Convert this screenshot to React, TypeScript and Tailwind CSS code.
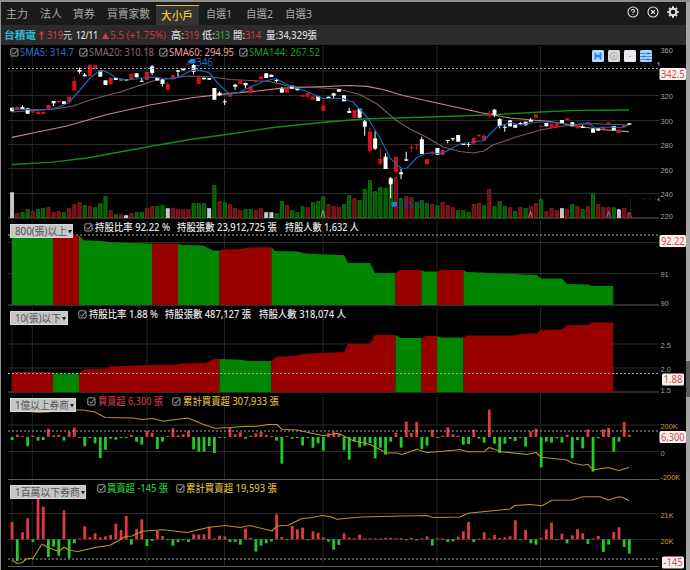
import { CircleHelp, CircleX } from "lucide-react";
import type { ReactNode } from "react";

const STEP = 5.187;
const LEFT = 12;
const barX = (i: number) => LEFT + i * STEP;

const verticals = [12, 32.3, 147, 224.5, 323, 437, 540.5];

// color, body top, body bottom, high, low (w = close below open, r = close above open)
type Candle = [string, number, number, number?, number?];

const candles: Candle[] = [
  ["w", 107.7, 111.3], ["r", 106.7, 110], ["w", 107, 109, 105], ["w", 108.3, 113.7], ["r", 111.3, 112.5],
  ["r", 111.7, 114], ["r", 111.7, 114], ["r", 105, 109], ["w", 101, 103.3, 101, 106], ["r", 100.7, 102.3],
  ["w", 101.3, 104], ["r", 96.7, 102.3], ["r", 81, 90.3, 77], ["w", 70, 71.7, 67.5, 73.7], ["w", 74.7, 76.3, 73],
  ["r", 64.7, 76.3], ["r", 65.3, 69.3], ["w", 70.7, 76.7], ["w", 80.3, 85], ["r", 77.7, 84.3],
  ["w", 78, 80], ["w", 79.7, 80.3], ["w", 79.3, 80.5], ["r", 73.7, 79.3], ["w", 73.3, 77.3],
  ["w", 80.8, 81.8, 77.7], ["r", 72, 80], ["w", 66.3, 73, 65, 75], ["w", 77.7, 80.3], ["w", 79.7, 84, 79, 86.7],
  ["r", 84, 89.7, 82], ["r", 75, 78.3], ["w", 70.3, 71.7, 70, 76.7], ["w", 68.7, 70.3], ["r", 63.5, 64.5],
  ["w", 65, 71.7, 64, 74.3], ["r", 77.3, 83.7], ["w", 77.7, 79.3], ["w", 78, 79.7], ["w", 88, 99.7],
  ["w", 92.7, 95.3, 91.5, 96], ["w", 101.3, 102.3, 99.3, 105], ["r", 93.3, 96.7], ["w", 84.7, 86.7, 84, 89.7], ["r", 80.3, 84],
  ["w", 83, 85.3, 82.5, 88.3], ["r", 86.3, 93], ["r", 81, 82.3], ["r", 76.3, 79.3], ["w", 73.3, 78],
  ["w", 74.7, 77], ["w", 80, 81, 79, 82.3], ["w", 89, 92.7, 87], ["r", 88.3, 92.7], ["w", 85.7, 88.7],
  ["w", 88.3, 90.3], ["r", 95, 96.7], ["r", 93, 96.7, 92, 98], ["r", 96.3, 99.7], ["w", 96, 101],
  ["r", 105.7, 110.7, 100], ["w", 96.7, 98.7], ["w", 93.3, 95.7, 93, 98.3], ["w", 89.3, 91.7], ["w", 95.3, 101.3],
  ["w", 111, 113, 107.7], ["r", 110, 118], ["w", 108.7, 117.7], ["w", 121.3, 126.7, 120, 135.7], ["r", 131.7, 150.7, 127.7, 153.3],
  ["w", 138.3, 148.7, 131, 150], ["r", 159, 163.7, 148.3, 165], ["w", 156.7, 169, 153.3], ["w", 178.3, 184.3, 177, 198.3], ["r", 157, 171.7, 157, 173.3],
  ["w", 172.3, 174.3, 169, 179], ["w", 159.3, 160.7, 151.7], ["r", 147, 148.3, 144, 151.7], ["r", 144.3, 145.3, 144, 150], ["w", 139.3, 154, 136.7],
  ["r", 159, 164.3], ["r", 151.7, 153.3, 151, 156], ["w", 148, 154.7], ["r", 150, 155], ["w", 140, 141, 140, 143.3],
  ["w", 138.3, 139.3, 138, 141], ["w", 135, 141.7], ["w", 143, 145], ["w", 144, 144.8, 142.3, 146.7], ["r", 138, 143.7, 137],
  ["r", 135, 136.3, 134, 137], ["r", 135.7, 140.7, 134], ["r", 112.7, 116, 110, 118.3], ["w", 109.7, 114.7, 109, 117], ["w", 119, 126, 118, 128.3],
  ["w", 126.7, 127.7, 125, 131.7], ["w", 120.3, 126.3], ["w", 124.7, 127.7], ["w", 123, 124, 122, 125], ["w", 121.7, 125.3],
  ["w", 120, 121.7, 118], ["r", 114.3, 117.7], ["r", 125.7, 127], ["w", 123, 126.3], ["r", 123.7, 127.7],
  ["r", 123.3, 127.7], ["w", 120, 123.7], ["r", 118.3, 120.3], ["w", 122.3, 126.3], ["r", 124.3, 128.3],
  ["w", 126.7, 128, 125], ["r", 122.3, 124.3], ["w", 129, 132.7, 128], ["w", 128.3, 130.7], ["r", 126.7, 129],
  ["r", 122, 123.7], ["w", 126, 130], ["r", 129.7, 133], ["r", 125, 127.3], ["w", 123.3, 124.7],
];

// bar height with its color letter
const volume =
  "w25 r4 g5 g8 r6 g8 g9 r10 r5 r6 g5 r9 r13 r15 g12 r11 g10 g14 g21 r7 g3 r3 w2 r4 g5 g5 r9 r11 g11 g12 w9 r9 r8 r8 r8 g14 g14 g14 w9 g32 r16 g15 r13 " +
  "r9 r7 g8 g8 r7 r9 w5 w5 g4 g16 r12 g7 g5 g11 r10 g15 g16 g21 r13 r11 r10 g13 g22 r19 g17 g28 g37 g26 g30 g29 g33 r40 g19 r21 r20 g15 g17 g14 r13 g12 r15 r12 r10 g7 " +
  "g7 g5 r13 r14 g12 r28 g11 g16 g11 r10 g6 r10 g9 r11 r14 g18 r6 r9 r7 w9 r8 g13 r11 g8 r11 g24 r13 r10 r10 g10 w8 r9 r5";

const sma5 =
  "12,109 27,109.7 50,109.5 60,106.5 69,102.5 80,90 90,78 97,72.5 103,70.5 109,73 115,77.5 127,80 140,78.5 152,76.8 162,78 173,79 182,75.5 190,71 197,69.8 209,72.5 218,83.5 230,94.5 240,92 253,86 265,81 276,78.5 288,85 308,92 323,98.5 343,98.5 353,102 367,117 380,138 390,158 397,165 402,168.5 407,168 417,157.5 427,153 442,153.5 460,144 473,142 484,140.5 490,134 497,127 510,122.5 520,125 538,122 552,122 573,125 588,123 595,128 610,127 622,127.5 629,125";
const sma20 =
  "12,112 27,111 55,109 73,106 93,99 120,92 153,81 187,76 208,76.5 230,79.5 270,81.5 290,86.5 315,87.5 338,89 360,94.5 377,104 397,121 410,129 427,137.5 443,147 460,151.5 473,153 484,151 493,145 513,138 540,130 560,126.5 588,123.5 629,125";
const sma60 =
  "12,137.3 40,131.5 67,126 107,114.5 150,105 190,98 230,93.3 257,91 280,88.3 350,85.5 367,86.3 383,89.5 403,95.5 430,101.5 460,108 480,112.5 510,118 550,121.5 577,126 600,129.5 629,131.7";
const sma144 =
  "12,164.5 50,162.3 87,158 147,147 190,139.5 230,134 273,127.5 327,122 363,119 397,118 460,116 500,114.3 540,112 577,110.3 629,110";

const bigFlow = [
  -9, 7, 2, -28, 4, -11, -9, 25, 5, 6, -11, 16, 28, -2, -28, -3, -19, -63, -38, -5, -8, -3, -3, 6, -14, -23, 18, 13, -36, -14,
  3, 26, 5, 8, 19, -37, -44, -44, -27, -48, -2, -2, 28, 8, 14, -5, 4, 11, 16, 6, 3, -11, -80, 2, -5, -3, -25, -3, -32, -19,
  -41, 11, 17, 10, -40, -68, -14, -31, -26, -18, -64, -32, -53, -14, 13, -32, 46, 12, 45, -36, -26, 22, -2, 4, 29, 8, 4, -23, -21, 22,
  -5, -17, 82, -20, -48, -20, -6, -12, -3, -29, 17, 25, -91, -14, -17, -4, -17, 7, -64, -9, -34, 23, -104, -4, 23, 27, -44, -14, 45, 7,
];
const bigTotal =
  "12,410.5 28,411.5 38,412.3 47,412 67,410 83,410 95,412 105,417.5 133,418 142,419.5 153,418.5 163,421.3 172,420 188,418 203,424.3 215,428.3 230,427.5 243,426.5 257,426.3 268,424.5 277,424.5 282,429.3 297,430 323,435.7 338,433.3 353,440.5 370,444.5 387,453 397,453 402,454.5 417,449.3 427,452.5 443,451.3 460,449.5 468,451.7 484,451.7 489,447.5 502,451.7 527,454.5 536,452.5 541,457.3 567,460 572,463 583,465.3 588,464.3 593,470 608,467.5 619,470.5 629,467.5";

const smallFlow = [
  52, -65, 21, 63, -8, 125, 98, -53, -22, -49, 87, -57, -12, 2, 39, 6, 18, 6, 9, 13, 47, 28, 70, -16, 31, 60, -20, -5, 25, 10,
  -2, -19, -8, -3, -8, 15, 14, 15, 38, 2, 11, 9, -8, -8, -16, 32, 4, -37, -19, -12, -7, 75, 7, -2, 40, 30, 35, -2, 24, 19,
  6, -7, -31, -17, 18, 5, 3, 14, 2, 2, 2, 2, 4, 4, 2, 4, -3, 4, -3, 2, 9, -19, 2, 1, -8, -6, 8, 24, 52, -8,
  2, 21, 3, 13, 4, 6, 9, 57, -2, 28, -12, -16, 4, 30, 50, -2, 17, -12, 12, 30, 18, -14, 2, 10, -38, -16, 22, 36, -23, -43,
];
const smallTotal =
  "12,560 17,563.5 22,562.5 27,558.7 33,558.3 42,544 48,547.5 59,551.5 64,547 69,550.3 78,551.5 95,547.5 110,545.3 118,541 125,536.5 132,536 142,531.3 163,529.7 187,532.5 208,527.5 225,525.5 240,527.5 250,525.5 272,531 277,526 288,525.3 302,518.5 311,517.8 322,515.5 330,516.5 337,519.3 360,517 403,516 427,515.5 433,517.5 460,517 468,513.3 510,509 515,505.5 530,504.5 542,505.7 552,500.3 572,500 583,496.7 600,496.7 608,500 619,496.7 623,497.5 629,500.7";

const bigHold =
  "12,235.5 79,235.5 84,240.3 105,241.3 111,242.5 152,243.5 178,243.5 182,245 203,245.5 213,250.5 219.5,250.5 222,249.5 240,249 250,247.3 271.5,247.3 275,251 298,251.5 305,253.5 325,254.5 344,255 348,263 370,263 375,273.3 395.5,273.3 400,270 421.5,270 425,271.5 437,271.5 441,270 463,270 467,272 490,273 537,275 541,278.5 562,278.5 567,284 588,284.5 592,286 613.5,286";
const smallHold =
  "12,372 53,372 54,373.5 79,373.5 84,369.3 105,369 111,366.5 152,365 178,364.5 182,363.5 206,363 214,359 219.5,359 240,359.7 250,361 271.5,361 276,356.8 295,356 303,354 325,352.7 344,352 348,343.7 370,343.7 375,335 395.5,335 400,338 421.5,338 426,336 437,336 441,337.5 463,337.5 467,335.5 515,335.5 520,334 537,333.5 541,330 562,329.5 567,325.3 588,325 592,322.5 613.5,322.5";

const segments = [12, 53, 79, 152, 178, 219.5, 271.5, 395.5, 421.5, 437, 463.5, 613.5];
const smallSegments = [12, 53, 79, 219.5, 271.5, 395.5, 421.5, 437, 463.5, 613.5];

const candleFill: Record<string, string> = { r: "#d8101c", w: "#ffffff" };
const volumeFill: Record<string, string> = { r: "#6e1015", g: "#045c04", w: "#c8c8c8" };
const volumeStroke: Record<string, string> = { r: "#a82026", g: "#0c8a0c", w: "#dcdcdc" };

interface PanelProps {
  top: number;
  height: number;
  grid: number[];
  base: number;
  dashed: number;
  children: ReactNode;
  overlay?: ReactNode;
}

const Panel = ({ top, height, grid, base, dashed, children, overlay }: PanelProps) => (
  <section className="relative shrink-0">
    <svg className="block overflow-visible" width={685} height={height} viewBox={`1 ${top} 685 ${height}`}>
      {verticals.map((x) => (
        <line key={x} x1={x} x2={x} y1={top + 1} y2={base} stroke="#252525" />
      ))}
      {grid.map((y) => (
        <line key={y} x1={8} x2={659} y1={y} y2={y} stroke="#2b2b2b" />
      ))}
      <line x1={8} x2={659} y1={base} y2={base} stroke="#5a5a5a" />
      {children}
      <line x1={8} x2={659} y1={dashed} y2={dashed} stroke="#a4a4a4" strokeDasharray="2 2" />
    </svg>
    {overlay}
  </section>
);

interface AxisProps {
  labels: [string, number][];
  color?: string;
}

const Axis = ({ labels, color = "#a0a0a0" }: AxisProps) => (
  <g fill={color} fontFamily="Liberation Sans, sans-serif" fontSize={7.4}>
    {labels.map(([text, y]) => (
      <text key={text} x={660.5} y={y + 2.6}>
        {text}
      </text>
    ))}
  </g>
);

const Badge = ({ text, x, y, width }: { text: string; x: number; y: number; width: number }) => (
  <g>
    <rect x={x} y={y} width={width} height={12} rx={1.5} fill="#fdeeee" />
    <text
      x={x + 1.5}
      y={y + 9.7}
      textLength={width - 3}
      lengthAdjust="spacingAndGlyphs"
      fontFamily="Noto Sans, sans-serif"
      fontSize={10.2}
      fill="#c0504e"
    >
      {text}
    </text>
  </g>
);

const Flow = ({ data, base }: { data: number[]; base: number }) => (
  <g>
    {data.map((v, i) => {
      const h = Math.max(Math.abs(v) / 3, 0.9);
      return (
        <rect
          key={i}
          x={barX(i) - 1.3}
          y={v > 0 ? base - h : base}
          width={2.8}
          height={h}
          fill={v > 0 ? "#e03a40" : "#22cc22"}
        />
      );
    })}
  </g>
);

const Area = ({ id, points, cuts, base, first }: { id: string; points: string; cuts: number[]; base: number; first: "g" | "r" }) => (
  <g>
    <clipPath id={id}>
      <polygon points={`12,${base} ${points} 613.5,${base}`} />
    </clipPath>
    {cuts.slice(1).map((x, i) => {
      const green = (i % 2 === 0) === (first === "g");
      return (
        <rect
          key={x}
          clipPath={`url(#${id})`}
          x={cuts[i]}
          y={base - 90}
          width={x - cuts[i]}
          height={90}
          fill={green ? "#008600" : "#990000"}
        />
      );
    })}
  </g>
);

const Line = ({ points, color, width = 1.1 }: { points: string; color: string; width?: number }) => (
  <polyline points={points} fill="none" stroke={color} strokeWidth={width} strokeLinejoin="round" />
);

const Check = ({ className = "" }: { className?: string }) => (
  <svg className={`shrink-0 ${className}`} width={9} height={9} viewBox="0 0 9 9" fill="none" stroke="#b4b4b4">
    <rect x={0.8} y={0.8} width={7.2} height={7.2} rx={1} strokeWidth={0.9} />
    <path d="M2.4 4.6 4 6.3 7.4 2" strokeWidth={1} />
  </svg>
);

// one caption stretched to a fixed run of pixels
const Caption = ({ text, width, color, weight = 500, size = 10 }: { text: string; width: number; color: string; weight?: number; size?: number }) => (
  <svg className="block shrink-0 overflow-visible" width={width} height={14}>
    <text
      x={0}
      y={11}
      textLength={width}
      lengthAdjust="spacingAndGlyphs"
      fontFamily="Noto Sans, Noto Sans CJK TC, sans-serif"
      fontSize={size}
      fontWeight={weight}
      fill={color}
    >
      {text}
    </text>
  </svg>
);

const Picker = ({ text, width, className }: { text: string; width: number; className: string }) => (
  <button
    className={`absolute left-[9px] top-[5px] flex h-[14px] items-center bg-[#c6c6c6] border border-[#d6d6d6] pl-[4px] ${className}`}
  >
    <Caption text={text} width={width} color="#555555" weight={400} size={10.6} />
    <svg className="ml-px" width={4} height={5} viewBox="0 0 4 5">
      <path d="M0 1h4L2 4.5z" fill="#222" />
    </svg>
  </button>
);

const tabs = [
  { text: "主力", width: 22, box: "pl-[5px] w-[34px]" },
  { text: "法人", width: 22, box: "pl-[5px] w-[33px]" },
  { text: "資券", width: 22, box: "pl-[5px] w-[34px]" },
  { text: "買賣家數", width: 43, box: "pl-[5px] w-[54px]" },
  { text: "大小戶", width: 32, box: "pl-[5px] w-[43px] h-[20px] self-end bg-[#333] border-t border-[#e8b83a]", active: true },
  { text: "自選1", width: 26, box: "pl-[7px] w-[40px]" },
  { text: "自選2", width: 27, box: "pl-[7px] w-[39px]" },
  { text: "自選3", width: 27, box: "pl-[7px] w-[40px]" },
];

const Gear = () => (
  <svg width={12} height={12} viewBox="0 0 12 12" fill="none" stroke="#dedede">
    <circle cx={6} cy={6} r={3.3} strokeWidth={1.9} />
    <path d="M6 .3v2M6 9.700v2M.3 6h2M9.700 6h2M2 2l1.300 1.300M8.700 8.700 10 10M2 10l1.300-1.300M8.700 3.300 10 2" strokeWidth={2} />
  </svg>
);

const Tabs = () => (
  <header className="flex h-[23px] shrink-0 bg-[#1a1a1a]">
    {tabs.map((tab) => (
      <div key={tab.text} className={`${tab.box} flex shrink-0 items-center`}>
        <Caption text={tab.text} width={tab.width} color={tab.active ? "#f2c430" : "#a9a9a9"} size={10.8} weight={tab.active ? 500 : 400} />
      </div>
    ))}
    <div className="ml-auto mr-[7px] flex items-center gap-[8px] pb-[3px] text-[#e2e2e2]">
      <CircleHelp size={12} strokeWidth={2.2} />
      <CircleX size={12} strokeWidth={2.2} />
      <Gear />
    </div>
  </header>
);

const Quote = () => (
  <div className="flex h-[20px] shrink-0 items-center bg-[#2b2b2b] pl-[3px]">
    <Caption text="台積電" width={32} color="#30bcd4" weight={700} size={10.6} />
    <svg className="mx-[3px]" width={5} height={9} viewBox="0 0 5 9" fill="none" stroke="#d93038" strokeWidth={1.4}>
      <path d="M2.5 9V1M.5 3.4 2.5 1l2 2.4" />
    </svg>
    <Caption text="319" width={16} color="#d04046" weight={400} />
    <Caption text="元" width={9} color="#d0d0d0" weight={400} />
    <div className="ml-[4px] flex items-center">
      <Caption text="12/11" width={22} color="#e4e4e4" />
      <svg className="ml-[4px] mr-px" width={7} height={7} viewBox="0 0 7 7">
        <path d="M3.5.5 7 7H0z" fill="#d83840" />
      </svg>
      <Caption text="5.5 (+1.75%)" width={56} color="#c8363c" weight={400} />
    </div>
    <div className="ml-[5px] flex gap-[3px]">
      <div className="flex">
        <Caption text="高:" width={13} color="#d8d8d8" />
        <Caption text="319" width={15} color="#cf3b41" weight={400} />
      </div>
      <div className="flex">
        <Caption text="低:" width={13} color="#d8d8d8" />
        <Caption text="313" width={15} color="#2fae35" weight={400} />
      </div>
      <div className="flex">
        <Caption text="開:" width={12} color="#d8d8d8" />
        <Caption text="314" width={16} color="#cf3b41" weight={400} />
      </div>
      <div className="ml-[2px]">
        <Caption text="量:34,329張" width={51} color="#d8d8d8" />
      </div>
    </div>
  </div>
);

const averages = [
  { text: "SMA5: 314.7", width: 54, color: "#2a72c8" },
  { text: "SMA20: 310.18", width: 65, color: "#8c7070" },
  { text: "SMA60: 294.95", width: 65, color: "#eda79c" },
  { text: "SMA144: 267.52", width: 71, color: "#1c9e22" },
];

const Tools = () => (
  <div className="absolute left-[591px] top-[5px] flex gap-[4px]">
    <svg width={12} height={12} viewBox="0 0 12 12">
      <rect width={12} height={12} rx={1.5} fill="#b4dcff" />
      <path d="M3.5 2.500v7M8.500 2.500v7" stroke="#2a86dc" strokeWidth={1.9} />
      <path d="M3.500 6h5" stroke="#2a86dc" strokeWidth={2.6} />
    </svg>
    <svg width={12} height={12} viewBox="0 0 12 12" fill="none" stroke="#aaaaaa">
      <rect width={12} height={12} rx={1.5} fill="#d8d8d8" stroke="none" />
      <circle cx={6} cy={6} r={3.6} strokeWidth={0.9} />
      <path d="m4.700 4.700 2.600 2.600m0-2.600-2.600 2.600" strokeWidth={0.9} />
    </svg>
    <svg width={12} height={12} viewBox="0 0 12 12">
      <rect width={12} height={12} rx={1.5} fill="#e9ebf2" />
      <path d="M4.800 6.500h2.400" stroke="#a8a8b4" strokeWidth={1.2} />
    </svg>
    <svg width={12} height={12} viewBox="0 0 12 12">
      <rect width={12} height={12} rx={1.5} fill="#a8d6ff" />
      <path d="M0 3.500h12M0 6.500h12M0 9.500h12" stroke="#2d82d2" strokeWidth={0.9} />
      <path d="M8 2.500v2M4 5.500v2M8 8.500v2" stroke="#2277c8" strokeWidth={1.5} />
    </svg>
  </div>
);

const PricePanel = () => (
  <Panel
    top={45}
    height={174}
    grid={[71, 95.5, 120.5, 144.5, 168.5, 193.5]}
    base={218}
    dashed={68.5}
    overlay={
      <>
        <div className="absolute left-[9px] top-0 flex items-center gap-[5px]">
          {averages.map((a) => (
            <div key={a.text} className="flex items-center gap-px">
              <Check />
              <Caption text={a.text} width={a.width} color={a.color} weight={400} size={10.6} />
            </div>
          ))}
        </div>
        <Tools />
      </>
    }
  >
    {volume.split(" ").map((v, i) => (
      <rect
        key={i}
        x={barX(i) - 1.5}
        y={217.7 - Number(v.slice(1))}
        width={3.2}
        height={Number(v.slice(1))}
        fill={volumeFill[v[0]]}
        stroke={volumeStroke[v[0]]}
        strokeWidth={0.7}
      />
    ))}
    {/* event marks along the bottom */}
    <g fill="none" strokeWidth={0.9}>
      <path d="m321 217.500 2-7 2 7" stroke="#b8a878" />
      <path d="m528.500 217.500 2-6 2 6" stroke="#d08060" />
      <path d="m606.500 217.500 2-6 2 6" stroke="#6a80d0" />
      <path d="m627 217.500 2-5 3 5" stroke="#666" />
      <path d="M630.500 199v12" stroke="#2c2c2c" strokeDasharray="3 2" />
      <path d="M642 64h14M642 199h14" stroke="#242424" strokeDasharray="4 2" />
    </g>
    <path d="M657 63.500l2.500-2.500v5zM657 199.500l2.500-2.500v5z" fill="#777" />
    <Line points={sma144} color="#0f8f14" width={1.3} />
    <Line points={sma60} color="#c98986" width={1.2} />
    <Line points={sma20} color="#7d5a5c" />
    {candles.map(([c, top, bottom, high, low], i) => (
      <g key={i} fill={candleFill[c]}>
        <rect x={barX(i) - 0.5} y={high ?? top} width={1} height={(low ?? bottom) - (high ?? top)} />
        <rect x={barX(i) - 1.9} y={top} width={4} height={bottom - top} />
      </g>
    ))}
    <Line points={sma5} color="#1a66bc" width={1.2} />
    <path d="M187.500 62l3-3h5v4.500h-5z" fill="#1884e8" />
    <rect x={391.500} y={202} width={5.500} height={4.500} rx={1} fill="#1884e8" />
    <g fontFamily="Noto Sans, sans-serif">
      <text x={196} y={66} textLength={17} fontSize={10} fill="#2070c8">
        346
      </text>
      <text x={398} y={207.500} textLength={25} fontSize={9} fill="#1c3f96">
        235.5
      </text>
    </g>
    <Axis labels={[["360", 50], ["320", 96.3], ["300", 121.3], ["280", 145.7], ["260", 170.3], ["240", 194.7], ["220", 216]]} />
    <Badge text="342.5" x={659.500} y={68} width={26.500} />
  </Panel>
);

const App = () => {
  return (
    <main className="flex h-[570px] w-[690px] overflow-hidden border-t-2 border-l border-[#8f8f8f] bg-black">
      <div className="flex w-[685px] shrink-0 flex-col overflow-hidden">
        <Tabs />
        <Quote />
        <PricePanel />

        {/* holders above 800 lots */}
        <Panel
          top={219}
          height={87}
          grid={[242.5, 273.5]}
          base={305}
          dashed={235}
          overlay={
            <>
              <Picker text="800(張)以上" width={52} className="w-[63px]" />
              <div className="absolute left-[83px] top-[1px] flex items-center">
                <Check className="mr-[2px]" />
                <Caption text="持股比率 92.22 %" width={75} color="#e6e6e6" />
                <div className="ml-[7px] flex gap-[8px]">
                  <Caption text="持股張數 23,912,725 張" width={100} color="#e6e6e6" />
                  <Caption text="持股人數 1,632 人" width={74} color="#e6e6e6" />
                </div>
              </div>
            </>
          }
        >
          <Area id="big" points={bigHold} cuts={segments} base={305} first="g" />
          <Axis labels={[["91", 274.5], ["90", 303]]} />
          <Badge text="92.22" x={659.500} y={235} width={26.500} />
        </Panel>

        {/* holders below 10 lots */}
        <Panel
          top={306}
          height={87}
          grid={[344, 368]}
          base={392}
          dashed={373.5}
          overlay={
            <>
              <Picker text="10(張)以下" width={46} className="w-[58px]" />
              <div className="absolute left-[77px] top-[1px] flex items-center">
                <Check className="mr-[2px]" />
                <Caption text="持股比率 1.88 %" width={69} color="#e6e6e6" />
                <div className="ml-[7px] flex gap-[8px]">
                  <Caption text="持股張數 487,127 張" width={86} color="#e6e6e6" />
                  <Caption text="持股人數 318,074 人" width={87} color="#e6e6e6" />
                </div>
              </div>
            </>
          }
        >
          <Area id="small" points={smallHold} cuts={smallSegments} base={392} first="r" />
          <Axis labels={[["2.5", 345], ["2.0", 369], ["1.5", 390]]} />
          <Badge text="1.88" x={662} y={373.500} width={22} />
        </Panel>

        {/* brokers above 100 million */}
        <Panel
          top={393}
          height={87}
          grid={[425, 451.500]}
          base={479.500}
          dashed={431}
          overlay={
            <>
              <Picker text="1億以上券商" width={54} className="w-[66px]" />
              <div className="absolute left-[86px] top-[1px] flex items-center">
                <Check className="mr-[2px]" />
                <Caption text="買賣超 6,300 張" width={65} color="#c4383c" />
                <Check className="ml-[9px] mr-[2px]" />
                <Caption text="累計買賣超 307,933 張" width={96} color="#d8b23c" />
              </div>
            </>
          }
        >
          <Flow data={bigFlow} base={437} />
          <Line points={bigTotal} color="#b5952a" />
          <Axis color="#c9a52e" labels={[["200K", 426.500], ["0", 453.300], ["-200K", 477.500]]} />
          <Badge text="6,300" x={659.500} y={431} width={26.500} />
        </Panel>

        {/* brokers below 1 million */}
        <Panel
          top={480}
          height={90}
          grid={[513.500, 539.500]}
          base={566.500}
          dashed={559}
          overlay={
            <>
              <Picker text="1百萬以下券商" width={65} className="w-[76px]" />
              <div className="absolute left-[96px] top-[1px] flex items-center">
                <Check className="mr-px" />
                <Caption text="買賣超 -145 張" width={61} color="#2cc034" />
                <Check className="ml-[8px] mr-px" />
                <Caption text="累計買賣超 19,593 張" width={91} color="#d8b23c" />
              </div>
            </>
          }
        >
          <Flow data={smallFlow} base={539.300} />
          <Line points={smallTotal} color="#b5952a" />
          <Axis color="#c9a52e" labels={[["21K", 515], ["20K", 541]]} />
          <Badge text="-145" x={662} y={556.500} width={22} />
        </Panel>
      </div>

      {/* scrollbar */}
      <div className="w-[4px] shrink-0 bg-[#a6a6a6] pt-[359px]">
        <div className="h-[36px] bg-[#5c5c5c]" />
      </div>
    </main>
  );
};

export default App;
